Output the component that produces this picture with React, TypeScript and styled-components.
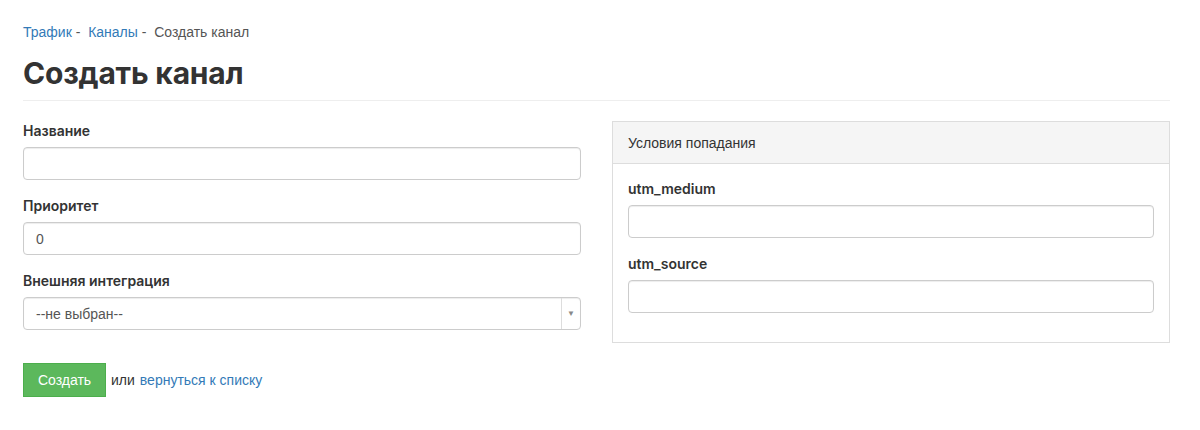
import React from "react";
import styled, { createGlobalStyle } from "styled-components";

const G = createGlobalStyle`
  body { margin: 0; background: #fff; font-family: "Liberation Sans", Arial, sans-serif; color: #333; }
`;
const Page = styled.div`padding: 22px 30px 0 23px;`;
const Crumbs = styled.div`font-size: 14px; color: #555; height: 20px; line-height: 20px;`;
const A = styled.a`color: #337ab7; text-decoration: none;`;
const Title = styled.h1`
  margin: 14px 0 0; font-family: Inter, sans-serif; font-weight: 700; font-size: 30px;
  color: #333; padding-bottom: 10px; border-bottom: 1px solid #eee; line-height: 34px; letter-spacing: -0.2px;
`;
const Grid = styled.div`display: grid; grid-template-columns: 558px 558px; gap: 31px; margin-top: 20px;`;
const Col = styled.div`display: flex; flex-direction: column;`;
const Label = styled.div`font-family: Inter, sans-serif; font-weight: 600; font-size: 14px; color: #333; line-height: 20px; margin-bottom: 6px;`;
const Field = styled.div`margin-bottom: 16px;`;
const Input = styled.div`
  box-sizing: border-box; height: 33px; border: 1px solid #ccc; border-radius: 4px;
  padding: 0 12px; display: flex; align-items: center; font-size: 14px; color: #555;
  box-shadow: inset 0 1px 1px rgba(0,0,0,.075);
`;
const Select = styled(Input)`padding-right: 0; justify-content: space-between;`;
const Arrow = styled.div`width: 18px; height: 100%; border-left: 1px solid #ddd; display: flex; align-items: center; justify-content: center; font-size: 8px; color: #888;`;
const Panel = styled.div`border: 1px solid #ddd; height: 222px; box-sizing: border-box;`;
const PanelHead = styled.div`background: #f5f5f5; border-bottom: 1px solid #ddd; height: 42px; box-sizing: border-box; padding: 0 15px; display: flex; align-items: center; font-size: 14px; color: #333;`;
const PanelBody = styled.div`padding: 15px 15px 0;`;
const Actions = styled.div`display: flex; align-items: center; gap: 5px; margin-top: 17px; font-size: 14px; color: #333;`;
const Btn = styled.button`
  background: #5cb85c; border: 1px solid #4cae4c; color: #fff; font-size: 14px;
  font-family: "Liberation Sans", Arial, sans-serif; height: 34px; width: 83px; padding: 0;
`;

export default function App() {
  return (
    <Page>
      <G />
      <Crumbs><A>Трафик</A> - &nbsp;<A>Каналы</A> - &nbsp;Создать канал</Crumbs>
      <Title>Создать канал</Title>
      <Grid>
        <Col>
          <Field><Label>Название</Label><Input /></Field>
          <Field><Label>Приоритет</Label><Input>0</Input></Field>
          <Field><Label>Внешняя интеграция</Label><Select>--не выбран--<Arrow>▼</Arrow></Select></Field>
        </Col>
        <Panel>
          <PanelHead>Условия попадания</PanelHead>
          <PanelBody>
            <Field><Label>utm_medium</Label><Input /></Field>
            <Field><Label>utm_source</Label><Input /></Field>
          </PanelBody>
        </Panel>
      </Grid>
      <Actions><Btn>Создать</Btn>или <A>вернуться к списку</A></Actions>
    </Page>
  );
}
